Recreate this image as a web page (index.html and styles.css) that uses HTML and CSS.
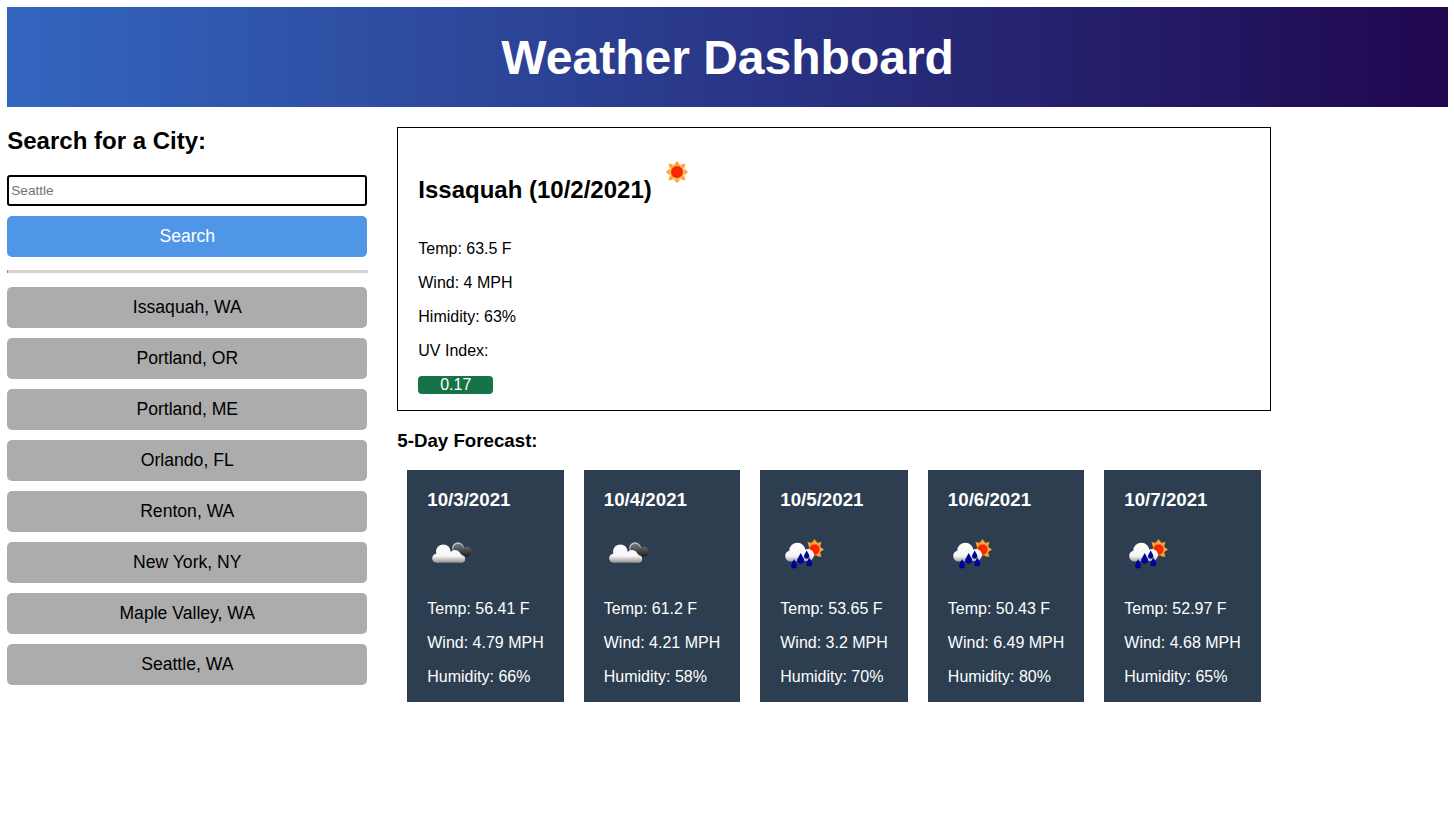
FILE: index.html
```html
<!DOCTYPE html>
<html lang="en">
<head>
    <meta charset="UTF-8">
    <meta name="viewport" content="width=device-width, initial-scale=1.0">
    <title>Weather Dashboard</title>
    <link rel="stylesheet" href="styles.css">
</head>
<body>
    <svg class="icon-defs" width="0" height="0" aria-hidden="true">
        <defs>
            <radialGradient id="sun-core" cx="50%" cy="50%" r="50%">
                <stop offset="0%" stop-color="#ff3000"/>
                <stop offset="72%" stop-color="#f52000"/>
                <stop offset="100%" stop-color="#ffc030"/>
            </radialGradient>
            <linearGradient id="cloud-white" gradientUnits="userSpaceOnUse" x1="0" y1="14" x2="0" y2="34">
                <stop offset="0%" stop-color="#ffffff"/>
                <stop offset="65%" stop-color="#f6f6f6"/>
                <stop offset="100%" stop-color="#8c8c8c"/>
            </linearGradient>
            <linearGradient id="cloud-dark" gradientUnits="userSpaceOnUse" x1="0" y1="14" x2="0" y2="28">
                <stop offset="0%" stop-color="#808080"/>
                <stop offset="100%" stop-color="#1c1c1c"/>
            </linearGradient>
            <symbol id="icon-sun" viewBox="0 0 50 50">
                <g fill="#ffa030">
                    <path d="M25 13 L21.500 17.800 L28.500 17.800 Z"/>
                    <path d="M25 35 L21.500 31.200 L28.500 31.200 Z"/>
                    <path d="M14 24 L17.800 20.500 L17.800 27.500 Z"/>
                    <path d="M36 24 L32.200 20.500 L32.200 27.500 Z"/>
                    <path d="M16.500 15.500 L22 17 L18 21 Z"/>
                    <path d="M33.500 15.500 L28 17 L32 21 Z"/>
                    <path d="M16.500 32.500 L22 31 L18 27 Z"/>
                    <path d="M33.500 32.500 L28 31 L32 27 Z"/>
                </g>
                <circle cx="25" cy="24" r="7" fill="url(#sun-core)"/>
            </symbol>
            <symbol id="icon-clouds" viewBox="0 0 50 50">
                <circle cx="31" cy="19" r="5.800" fill="#c4c4c4"/>
                <g fill="url(#cloud-dark)">
                    <circle cx="31.300" cy="19.800" r="5"/>
                    <circle cx="39.700" cy="22.700" r="5"/>
                    <rect x="30" y="20" width="10" height="7.700"/>
                </g>
                <g fill="url(#cloud-white)">
                    <circle cx="16.300" cy="22.700" r="7.300"/>
                    <circle cx="9.700" cy="29.300" r="4.500"/>
                    <circle cx="28" cy="27" r="6"/>
                    <circle cx="34.500" cy="30" r="3.700"/>
                    <rect x="9.700" y="25" width="24.800" height="8.700"/>
                </g>
            </symbol>
            <symbol id="icon-rain" viewBox="0 0 50 50">
                <g fill="#ffa030">
                    <path d="M34.500 10 L31 15 L38 15 Z"/>
                    <path d="M44 20.500 L39 17 L39 24 Z"/>
                    <path d="M41.500 13 L36 14 L40 18 Z"/>
                    <path d="M27.500 13 L33 14 L29 18 Z"/>
                    <path d="M41.500 28 L36 27 L40 23 Z"/>
                </g>
                <circle cx="34.500" cy="20.500" r="6" fill="url(#sun-core)"/>
                <g fill="url(#cloud-white)">
                    <circle cx="17.300" cy="21.700" r="8"/>
                    <circle cx="10.700" cy="27" r="5.500"/>
                    <circle cx="28" cy="26" r="6"/>
                    <rect x="10.700" y="24" width="18" height="8"/>
                </g>
                <g fill="#00009c">
                    <path d="M14 30 L11.300 35.500 A2.900 2.900 0 1 0 16.700 35.500 Z"/>
                    <path d="M20.700 24 L17.400 30 A3.500 3.500 0 1 0 24 30 Z"/>
                    <path d="M26.700 21.500 L24.200 26 A2.700 2.700 0 1 0 29.200 26 Z"/>
                    <path d="M29.300 28.500 L26.600 33.500 A2.900 2.900 0 1 0 32 33.500 Z"/>
                </g>
            </symbol>
        </defs>
    </svg>

    <header class="banner">
        <h1>Weather Dashboard</h1>
    </header>

    <div class="page">
        <aside class="sidebar">
            <h2>Search for a City:</h2>
            <input class="city-input" placeholder="Seattle">
            <button class="search-btn">Search</button>
            <hr class="divider">
            <div class="history">
                <button class="city-btn">Issaquah, WA</button>
                <button class="city-btn">Portland, OR</button>
                <button class="city-btn">Portland, ME</button>
                <button class="city-btn">Orlando, FL</button>
                <button class="city-btn">Renton, WA</button>
                <button class="city-btn">New York, NY</button>
                <button class="city-btn">Maple Valley, WA</button>
                <button class="city-btn">Seattle, WA</button>
            </div>
        </aside>

        <main class="content">
            <section class="current">
                <h2>Issaquah (10/2/2021)<svg class="icon"><use href="#icon-sun"/></svg></h2>
                <p>Temp: 63.5 F</p>
                <p>Wind: 4 MPH</p>
                <p>Himidity: 63%</p>
                <p>UV Index:</p>
                <div class="uv">0.17</div>
            </section>

            <h3 class="forecast-title">5-Day Forecast:</h3>
            <div class="forecast">
                <div class="day">
                    <h3>10/3/2021</h3>
                    <svg class="icon"><use href="#icon-clouds"/></svg>
                    <p>Temp: 56.41 F</p>
                    <p>Wind: 4.79 MPH</p>
                    <p>Humidity: 66%</p>
                </div>
                <div class="day">
                    <h3>10/4/2021</h3>
                    <svg class="icon"><use href="#icon-clouds"/></svg>
                    <p>Temp: 61.2 F</p>
                    <p>Wind: 4.21 MPH</p>
                    <p>Humidity: 58%</p>
                </div>
                <div class="day">
                    <h3>10/5/2021</h3>
                    <svg class="icon"><use href="#icon-rain"/></svg>
                    <p>Temp: 53.65 F</p>
                    <p>Wind: 3.2 MPH</p>
                    <p>Humidity: 70%</p>
                </div>
                <div class="day">
                    <h3>10/6/2021</h3>
                    <svg class="icon"><use href="#icon-rain"/></svg>
                    <p>Temp: 50.43 F</p>
                    <p>Wind: 6.49 MPH</p>
                    <p>Humidity: 80%</p>
                </div>
                <div class="day">
                    <h3>10/7/2021</h3>
                    <svg class="icon"><use href="#icon-rain"/></svg>
                    <p>Temp: 52.97 F</p>
                    <p>Wind: 4.68 MPH</p>
                    <p>Humidity: 65%</p>
                </div>
            </div>
        </main>
    </div>
</body>
</html>
```

FILE: styles.css
```css
body {
    margin: 7px 6px 0 7.27px;
    font-family: "Liberation Sans", Arial, sans-serif;
    font-size: 16px;
    color: #000;
}

.icon-defs {
    position: absolute;
}

.banner {
    height: 100px;
    display: flex;
    justify-content: center;
    align-items: center;
    background: linear-gradient(to right, #3366bf, #20074f);
    color: white;
}

.banner h1 {
    margin: 0;
    font-size: 48px;
}

.page {
    display: flex;
    align-items: flex-start;
}

.sidebar {
    width: 360px;
    margin-right: 30px;
    display: flex;
    flex-direction: column;
}

.sidebar h2 {
    margin: 20px 0;
    font-size: 24px;
    line-height: 28px;
}

.city-input {
    box-sizing: border-box;
    height: 31px;
    margin: 0 0 10px;
    padding: 0 2px 1px;
    border: 2px solid black;
    border-radius: 3px;
    font-family: inherit;
    font-size: 13.6px;
}

.search-btn,
.city-btn {
    width: 100%;
    height: 41px;
    padding: 0;
    border: none;
    border-radius: 5px;
    font-family: inherit;
    font-size: 17.6px;
}

.search-btn {
    background-color: #4f96e6;
    color: white;
}

.divider {
    box-sizing: border-box;
    width: 361px;
    height: 3px;
    margin: 13px 0 14px;
    border: none;
    border-left: 1px solid #8a8a8a;
    background-color: #d3d3d3;
}

.history {
    display: flex;
    flex-direction: column;
    gap: 10px;
}

.city-btn {
    background-color: #acacac;
    color: black;
}

.content {
    width: 874px;
    padding-top: 20px;
}

.current {
    box-sizing: border-box;
    height: 284px;
    padding: 0 20px;
    border: 1px solid black;
}

.current h2 {
    margin: 20px 0 36px;
    font-size: 24px;
}

.current p {
    margin: 0 0 16px;
    line-height: 18px;
}

.uv {
    width: 75px;
    height: 18px;
    border-radius: 4px;
    background-color: #157347;
    color: white;
    text-align: center;
    line-height: 18px;
}

.icon {
    width: 50px;
    height: 50px;
}

.forecast-title {
    margin: 19px 0 18px;
    font-size: 18.72px;
    line-height: 22px;
}

.forecast {
    display: flex;
    gap: 20px;
    padding-left: 10px;
}

.day {
    padding: 0 20px;
    height: 232px;
    background-color: #2c3e50;
    color: white;
}

.day h3 {
    margin: 19px 0 18px;
    font-size: 18.72px;
    line-height: 22px;
}

.day .icon {
    display: block;
    margin-bottom: 21px;
}

.day p {
    margin: 0 0 16px;
    line-height: 18px;
    white-space: nowrap;
}
```
